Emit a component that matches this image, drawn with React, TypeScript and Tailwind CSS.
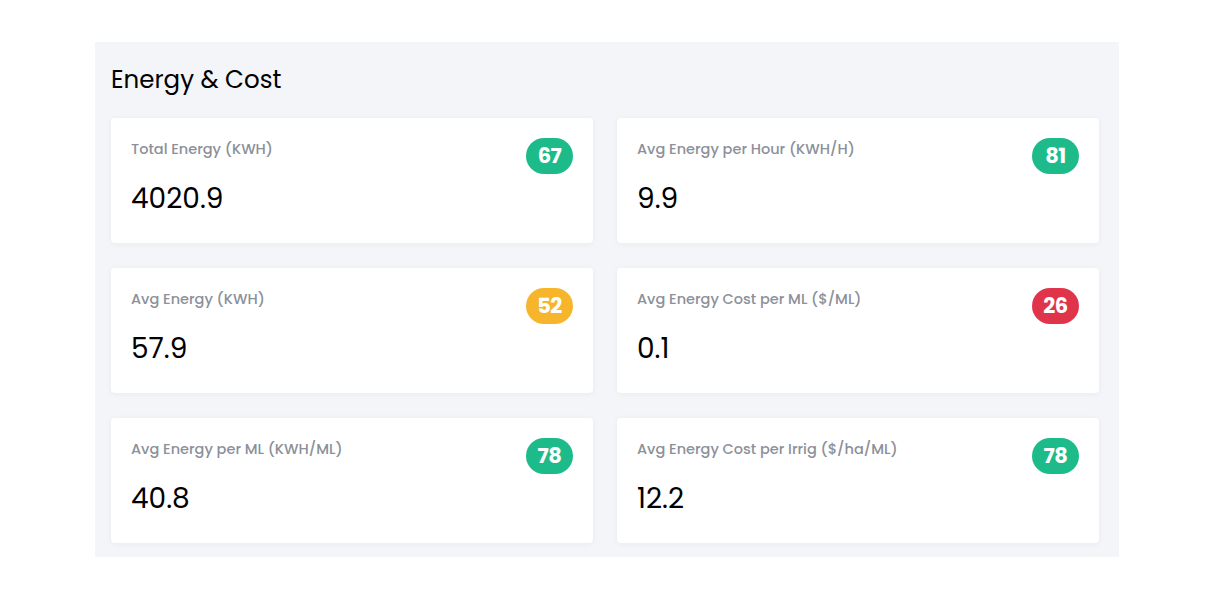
const stats = [
  { label: "Total Energy (KWH)", value: "4020.9", score: 67, tone: "green" },
  { label: "Avg Energy per Hour (KWH/H)", value: "9.9", score: 81, tone: "green" },
  { label: "Avg Energy (KWH)", value: "57.9", score: 52, tone: "yellow" },
  { label: "Avg Energy Cost per ML ($/ML)", value: "0.1", score: 26, tone: "red" },
  { label: "Avg Energy per ML (KWH/ML)", value: "40.8", score: 78, tone: "green" },
  { label: "Avg Energy Cost per Irrig ($/ha/ML)", value: "12.2", score: 78, tone: "green" },
];

const badgeTone: Record<string, string> = {
  green: "bg-[#1dbb8a]",
  yellow: "bg-[#f7b52c]",
  red: "bg-[#e0344a]",
};

function StatCard({ label, value, score, tone }: (typeof stats)[number]) {
  return (
    <div className="w-[482px] h-[125px] bg-white rounded-[4px] shadow-[0_1px_6px_rgba(30,40,80,0.05)] px-5 pt-5">
      <div className="flex items-start justify-between">
        <span className="mt-[1px] text-[14.5px] leading-5 font-medium text-[#8b9099]">{label}</span>
        <span
          className={`${badgeTone[tone]} w-[47px] h-9 rounded-full flex items-center justify-center text-white text-[21px] font-bold tracking-[-0.5px]`}
        >
          {score}
        </span>
      </div>
      <div className="text-[28px] leading-9 text-black mt-[7px]">{value}</div>
    </div>
  );
}

export default function App() {
  return (
    <div className="w-[1214px] h-[598px] bg-white pt-[42px] pl-[95px] font-['Poppins','Inter','Noto_Sans',sans-serif]">
      <div className="w-[1024px] h-[515px] bg-[#f4f5f9] px-4 pt-[22px]">
        <h2 className="text-[24.5px] leading-8 text-black">Energy &amp; Cost</h2>
        <div className="mt-[22px] grid grid-cols-[482px_482px] gap-x-6 gap-y-[25px]">
          {stats.map((s) => (
            <StatCard key={s.label} {...s} />
          ))}
        </div>
      </div>
    </div>
  );
}
